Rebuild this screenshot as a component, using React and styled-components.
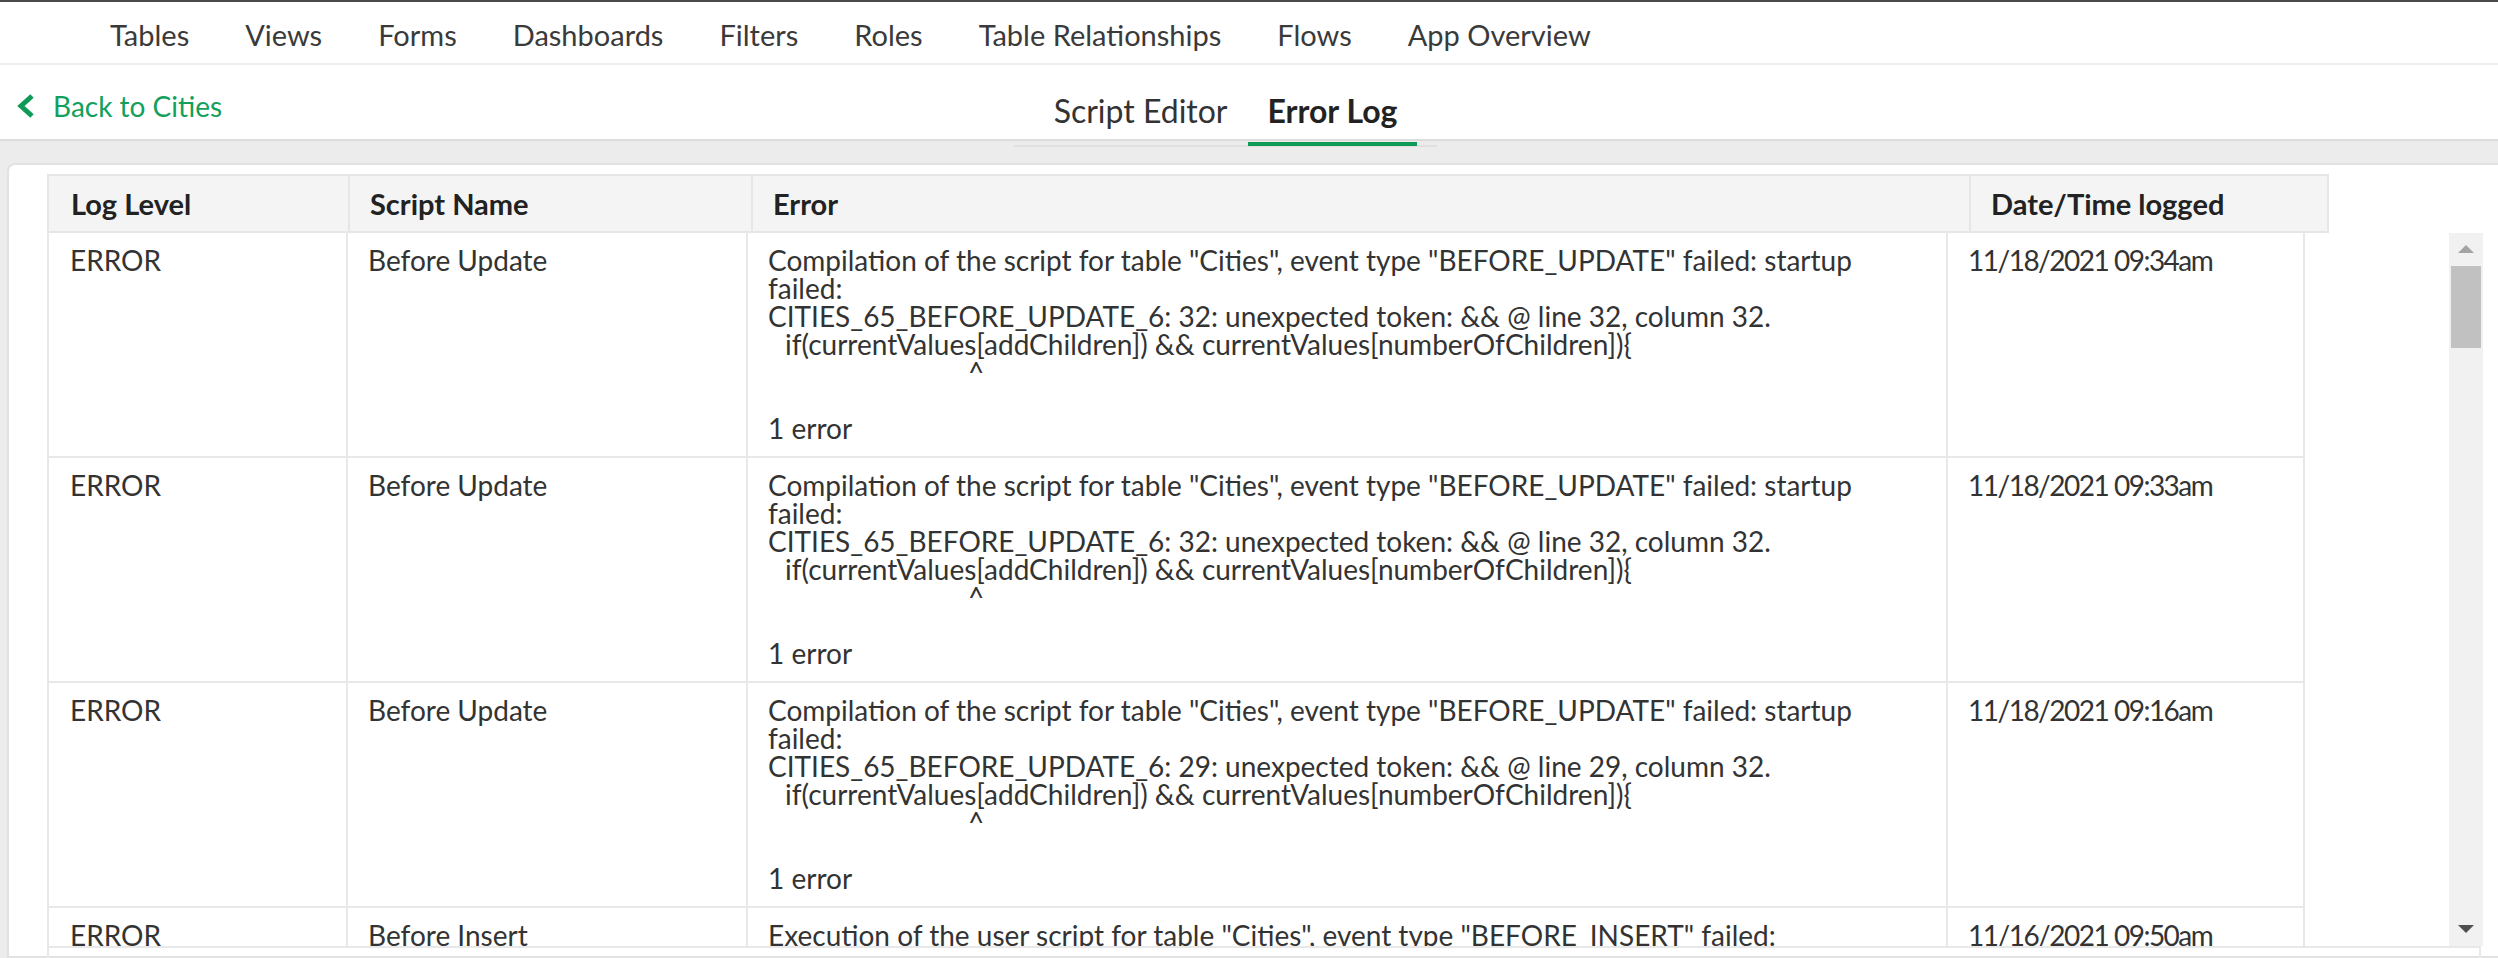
import styled, { createGlobalStyle } from "styled-components";

const GlobalStyle = createGlobalStyle`
  html, body {
    margin: 0;
    padding: 0;
    height: 100%;
    overflow: hidden;
    background: #ececec;
    font-family: Lato, "Open Sans", sans-serif;
  }
`;

const Page = styled.div`
  display: flex;
  flex-direction: column;
  height: 100vh;
`;

const NavBar = styled.nav`
  display: flex;
  gap: 56px;
  height: 43px;
  padding: 18px 0 0 110px;
  background: #fff;
  border-top: 2px solid #4a4a4a;
  border-bottom: 2px solid #eeeeee;
`;

const NavItem = styled.a`
  font-size: 29px;
  line-height: 30px;
  color: #3a3a3a;
  text-decoration: none;
  white-space: nowrap;
`;

const SubBar = styled.div`
  display: grid;
  grid-template-columns: 1fr auto 1fr;
  align-items: end;
  height: 74px;
  padding: 0 64px 0 17px;
  background: #fff;
  border-bottom: 2px solid #dcdcdc;
`;

const BackLink = styled.a`
  display: flex;
  align-items: center;
  gap: 18px;
  margin-bottom: 18px;
  font-size: 28px;
  line-height: 30px;
  color: #12a05c;
  text-decoration: none;
`;

const TabList = styled.div`
  position: relative;
  z-index: 1;
  display: flex;
  margin-bottom: -8px;
  padding: 0 20px;
  border-bottom: 2px solid #e0e0e0;
`;

const Tab = styled.div`
  padding: 0 20px 15px;
  font-size: 32px;
  line-height: 32px;
  font-weight: ${(p) => (p.$active ? 700 : 400)};
  color: ${(p) => (p.$active ? "#222" : "#333")};
  border-bottom: 4px solid ${(p) => (p.$active ? "#0e9a57" : "transparent")};
  margin-bottom: -1px;
  white-space: nowrap;
`;

const Content = styled.main`
  flex: 1;
  min-height: 0;
  padding: 22px 0 0 7px;
`;

const Card = styled.section`
  height: 100%;
  padding: 9px 0 0 38px;
  background: #fff;
  border: 2px solid #e2e2e2;
  border-right: none;
  border-radius: 8px 0 0 0;
  box-sizing: border-box;
`;

const HeaderRow = styled.div`
  display: grid;
  grid-template-columns: 299px 403px 1218px 358px;
  width: 2282px;
  height: 59px;
  box-sizing: border-box;
  background: #f4f4f4;
  border: 2px solid #e6e6e6;
`;

const HeadCell = styled.div`
  display: flex;
  align-items: center;
  padding-left: ${(p) => (p.$first ? 22 : 20)}px;
  border-left: ${(p) => (p.$first ? "none" : "2px solid #e6e6e6")};
  font-size: 29px;
  font-weight: 700;
  color: #222;
  white-space: nowrap;
`;

const BodyScroll = styled.div`
  display: flex;
  justify-content: space-between;
  width: 2436px;
  height: 713px;
  overflow: hidden;
`;

const BodyTable = styled.div`
  width: 2258px;
  flex-shrink: 0;
`;

const Row = styled.div`
  display: grid;
  grid-template-columns: 297px 400px 1200px 357px;
  border: 2px solid #e8e8e8;
  border-top: none;
`;

const Cell = styled.div`
  padding: 13px 20px 14px ${(p) => (p.$first ? 21 : 20)}px;
  border-left: ${(p) => (p.$first ? "none" : "2px solid #e8e8e8")};
  font-size: 28px;
  line-height: 28px;
  letter-spacing: ${(p) => (p.$date ? "-1.5px" : "normal")};
  color: #333;
  white-space: pre;
  overflow: hidden;
`;

const Line = styled.div`
  min-height: 28px;
  padding-left: ${(p) => p.$indent || 0}px;
`;

const ScrollBar = styled.div`
  display: flex;
  flex-direction: column;
  width: 34px;
  margin-top: -1px;
  background: #f1f1f1;
  flex-shrink: 0;
`;

const ScrollButton = styled.div`
  display: flex;
  align-items: center;
  justify-content: center;
  height: 34px;
`;

const Arrow = styled.div`
  width: 0;
  height: 0;
  border-left: 8px solid transparent;
  border-right: 8px solid transparent;
  ${(p) =>
    p.$down
      ? "border-top: 8px solid #505050;"
      : "border-bottom: 8px solid #a3a3a3;"}
`;

const Track = styled.div`
  flex: 1;
  padding: 0 2px;
`;

const Thumb = styled.div`
  height: 82px;
  background: #c1c1c1;
`;

const Footer = styled.div`
  width: 2434px;
  height: 40px;
  border: 2px solid #e8e8e8;
  box-sizing: border-box;
`;

const navItems = [
  "Tables",
  "Views",
  "Forms",
  "Dashboards",
  "Filters",
  "Roles",
  "Table Relationships",
  "Flows",
  "App Overview",
];

const compileError = (n) => [
  { text: 'Compilation of the script for table "Cities", event type "BEFORE_UPDATE" failed: startup' },
  { text: "failed:" },
  { text: `CITIES_65_BEFORE_UPDATE_6: ${n}: unexpected token: && @ line ${n}, column 32.` },
  { text: "if(currentValues[addChildren]) && currentValues[numberOfChildren]){", indent: 17 },
  { text: "^", indent: 200 },
  { text: "" },
  { text: "1 error" },
];

const rows = [
  { level: "ERROR", script: "Before Update", error: compileError(32), date: "11/18/2021 09:34am" },
  { level: "ERROR", script: "Before Update", error: compileError(32), date: "11/18/2021 09:33am" },
  { level: "ERROR", script: "Before Update", error: compileError(29), date: "11/18/2021 09:16am" },
  {
    level: "ERROR",
    script: "Before Insert",
    error: [
      { text: 'Execution of the user script for table "Cities", event type "BEFORE_INSERT" failed:' },
      { text: 'TypeError: Cannot read property "value" of undefined' },
      { text: "" },
    ],
    date: "11/16/2021 09:50am",
  },
];

function Chevron() {
  return (
    <svg width="18" height="24" viewBox="0 0 18 24">
      <polyline points="15,2 4,12 15,22" fill="none" stroke="#0e9a57" strokeWidth="5" />
    </svg>
  );
}

export default function App() {
  return (
    <Page>
      <GlobalStyle />
      <NavBar>
        {navItems.map((item) => (
          <NavItem key={item}>{item}</NavItem>
        ))}
      </NavBar>
      <SubBar>
        <BackLink>
          <Chevron />
          Back to Cities
        </BackLink>
        <TabList>
          <Tab>Script Editor</Tab>
          <Tab $active>Error Log</Tab>
        </TabList>
        <div />
      </SubBar>
      <Content>
        <Card>
          <HeaderRow>
            <HeadCell $first>Log Level</HeadCell>
            <HeadCell>Script Name</HeadCell>
            <HeadCell>Error</HeadCell>
            <HeadCell>Date/Time logged</HeadCell>
          </HeaderRow>
          <BodyScroll>
            <BodyTable>
              {rows.map((row, i) => (
                <Row key={i}>
                  <Cell $first>{row.level}</Cell>
                  <Cell>{row.script}</Cell>
                  <Cell>
                    {row.error.map((line, j) => (
                      <Line key={j} $indent={line.indent}>
                        {line.text}
                      </Line>
                    ))}
                  </Cell>
                  <Cell $date>{row.date}</Cell>
                </Row>
              ))}
            </BodyTable>
            <ScrollBar>
              <ScrollButton>
                <Arrow />
              </ScrollButton>
              <Track>
                <Thumb />
              </Track>
              <ScrollButton>
                <Arrow $down />
              </ScrollButton>
            </ScrollBar>
          </BodyScroll>
          <Footer />
        </Card>
      </Content>
    </Page>
  );
}
